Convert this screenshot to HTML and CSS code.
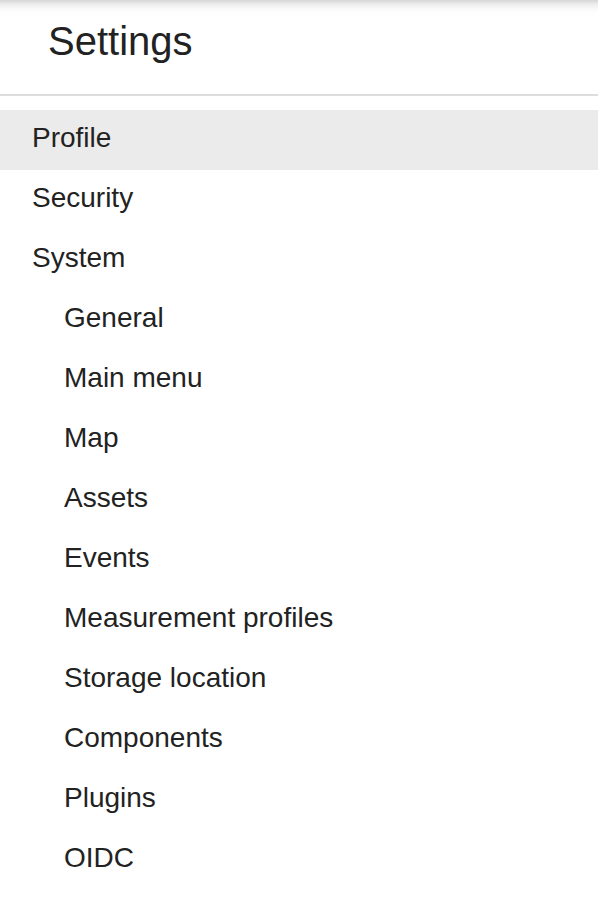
FILE: index.html
```html
<!DOCTYPE html>
<html>
<head>
<meta charset="utf-8">
<link rel="stylesheet" href="styles.css">
</head>
<body>
<div class="page">
  <div class="topshade"></div>
  <header class="header"><h1 class="title">Settings</h1></header>
  <nav class="menu">
    <div class="item active">Profile</div>
    <div class="item">Security</div>
    <div class="item">System</div>
    <div class="item sub">General</div>
    <div class="item sub">Main menu</div>
    <div class="item sub">Map</div>
    <div class="item sub">Assets</div>
    <div class="item sub">Events</div>
    <div class="item sub">Measurement profiles</div>
    <div class="item sub">Storage location</div>
    <div class="item sub">Components</div>
    <div class="item sub">Plugins</div>
    <div class="item sub">OIDC</div>
  </nav>
</div>
</body>
</html>
```

FILE: styles.css
```css
html, body {
  margin: 0;
  padding: 0;
  background: #fff;
}
body {
  font-family: "Liberation Sans", Arial, sans-serif;
  color: #222;
}
.page {
  position: relative;
  width: 598px;
  height: 906px;
  overflow: hidden;
}
.topshade {
  position: absolute;
  top: 0;
  left: 0;
  right: 0;
  height: 14px;
  background: linear-gradient(to bottom, #d6d6d6 0%, #ededed 30%, #fafafa 65%, rgba(255,255,255,0) 100%);
}
.header {
  height: 94px;
  border-bottom: 2px solid #dddddd;
  box-sizing: content-box;
}
.title {
  margin: 0;
  padding: 18px 0 0 48px;
  font-size: 40px;
  font-weight: normal;
  line-height: 46px;
  color: #222;
}
.menu {
  padding-top: 14px;
}
.item {
  height: 60px;
  line-height: 56px;
  padding-left: 32px;
  font-size: 28px;
  color: #222;
}
.item.sub {
  padding-left: 64px;
}
.item.active {
  background: #ebebeb;
}
```
